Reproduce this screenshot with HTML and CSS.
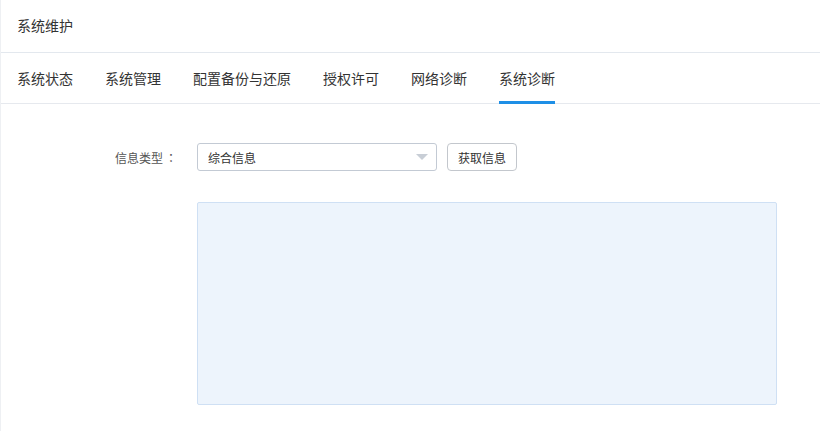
FILE: index.html
```html
<!DOCTYPE html>
<html lang="zh">
<head>
<meta charset="utf-8">
<link rel="stylesheet" href="styles.css">
</head>
<body>
<div class="page">
  <div class="header">系统维护</div>
  <div class="tabs">
    <div class="tab">系统状态</div>
    <div class="tab">系统管理</div>
    <div class="tab">配置备份与还原</div>
    <div class="tab">授权许可</div>
    <div class="tab">网络诊断</div>
    <div class="tab active">系统诊断</div>
  </div>
  <div class="content">
    <div class="form-row">
      <div class="label">信息类型<span class="colon">：</span></div>
      <div class="select">
        <span>综合信息</span>
        <span class="caret"></span>
      </div>
      <button class="btn">获取信息</button>
    </div>
    <div class="output-row">
      <div class="output"></div>
    </div>
  </div>
</div>
</body>
</html>
```
FILE: styles.css
```css
html, body {
  margin: 0;
  padding: 0;
  background: #fff;
}
body {
  font-family: "Noto Sans CJK SC", "Noto Sans", sans-serif;
  color: #333;
}
.page {
  width: 820px;
  height: 431px;
  border-left: 1px solid #eef0f3;
  box-sizing: border-box;
}
.header {
  height: 53px;
  box-sizing: border-box;
  border-bottom: 1px solid #e3e8ee;
  padding-left: 16px;
  line-height: 51px;
  font-size: 14px;
  color: #333;
}
.tabs {
  display: flex;
  height: 51px;
  box-sizing: border-box;
  border-bottom: 1px solid #e6e9ee;
  padding-left: 16px;
}
.tab {
  font-size: 14px;
  line-height: 51px;
  margin-right: 32px;
  color: #333;
  position: relative;
  height: 50px;
}
.tab.active::after {
  content: "";
  position: absolute;
  left: 0;
  right: 0;
  bottom: -1px;
  height: 3px;
  background: #1e8fe6;
}
.content {
  padding-top: 39px;
}
.form-row {
  display: flex;
  align-items: center;
  height: 28px;
}
.label {
  width: 174px;
  text-align: right;
  font-size: 12px;
  color: #555;
  margin-right: 22px;
}
.colon {
  display: inline-block;
  width: 10px;
  padding-left: 2px;
  font-family: "Noto Sans CJK TC", sans-serif;
}
.select {
  width: 240px;
  height: 28px;
  box-sizing: border-box;
  border: 1px solid #c3cad4;
  border-radius: 3px;
  display: flex;
  align-items: center;
  justify-content: space-between;
  padding: 0 8px 0 10px;
  font-size: 12px;
  color: #333;
}
.caret {
  width: 0;
  height: 0;
  border-left: 6px solid transparent;
  border-right: 6px solid transparent;
  border-top: 6px solid #c8ced6;
}
.btn {
  margin-left: 10px;
  width: 70px;
  height: 28px;
  box-sizing: border-box;
  border: 1px solid #c3c7cd;
  border-radius: 4px;
  background: #fff;
  font-family: inherit;
  font-size: 12px;
  color: #333;
  padding: 0;
}
.output-row {
  padding-left: 196px;
  padding-top: 31px;
}
.output {
  width: 580px;
  height: 203px;
  box-sizing: border-box;
  background: #edf4fc;
  border: 1px solid #cfe0f4;
  border-radius: 2px;
}
```
